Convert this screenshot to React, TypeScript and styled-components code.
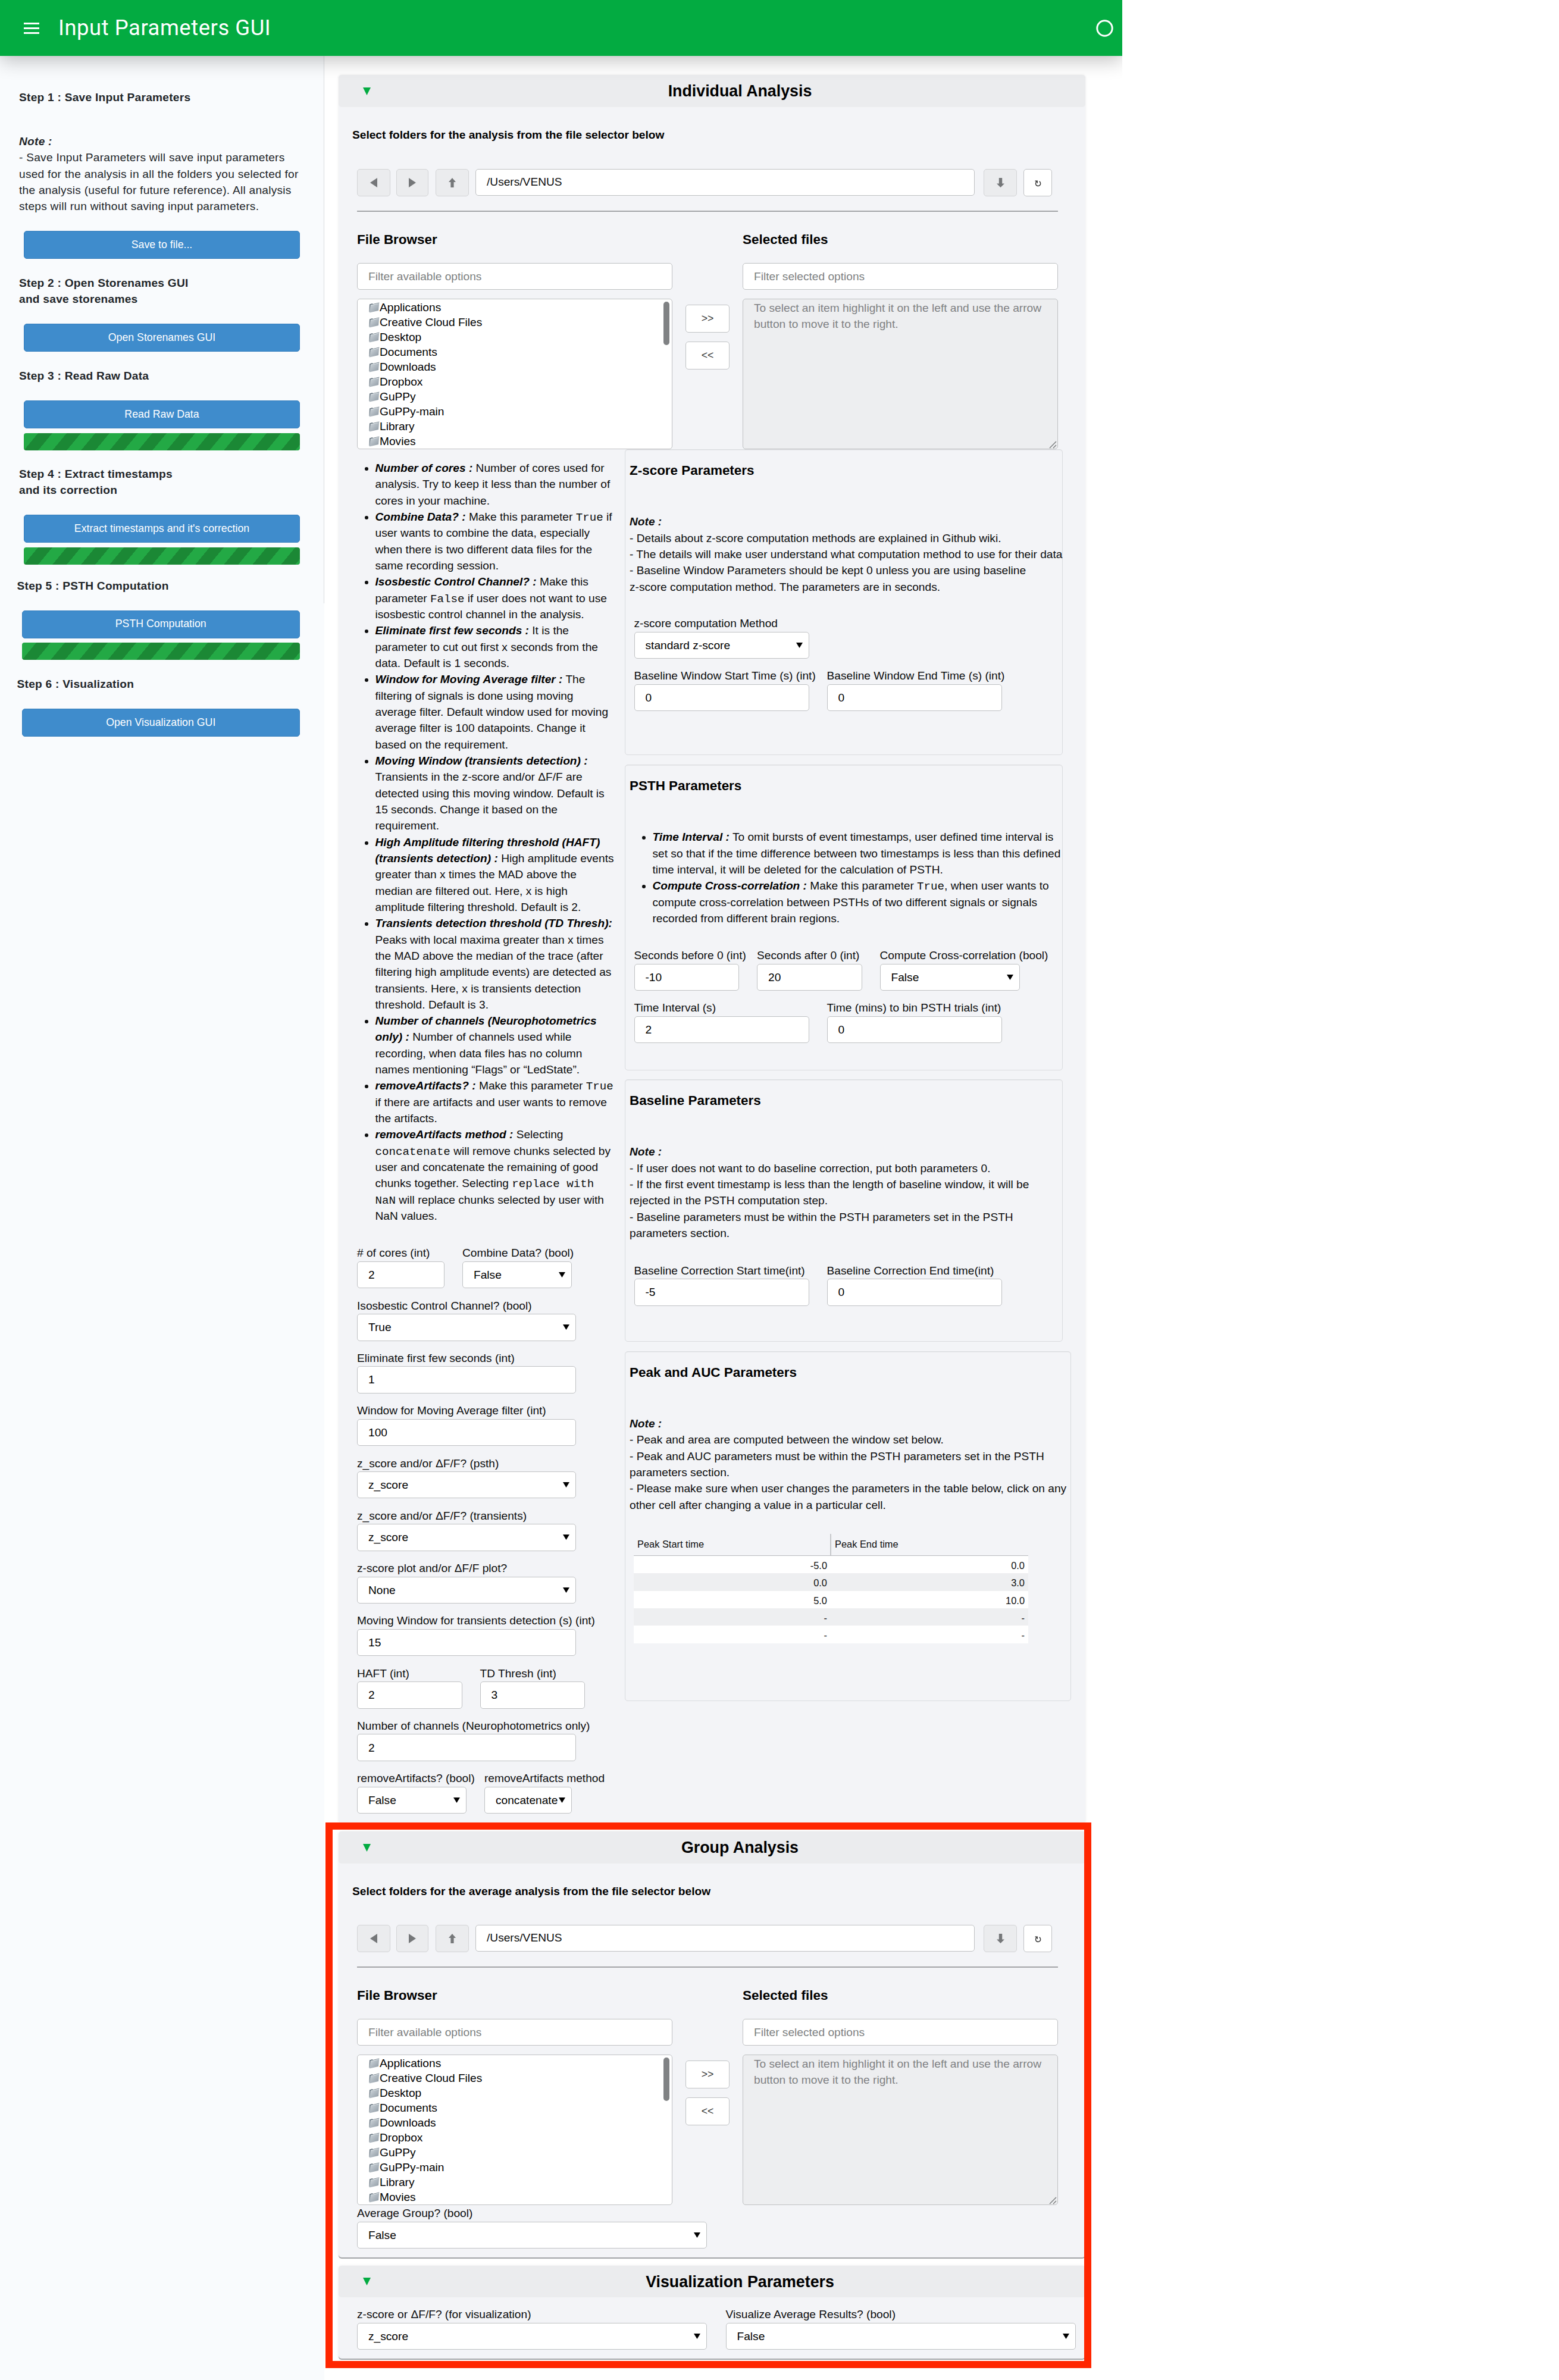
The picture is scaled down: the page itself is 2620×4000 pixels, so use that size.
import React from "react";
import styled, { createGlobalStyle } from "styled-components";

const GlobalStyle = createGlobalStyle`
  * { box-sizing: border-box; }
  body {
    margin: 0;
    background: #ffffff;
    font-family: "Liberation Sans", Arial, Helvetica, sans-serif;
    font-size: 19.15px;
    line-height: 27.33px;
    color: #0c0d0e;
  }
`;

const Page = styled.div`
  width: 1886px;
  height: 4000px;
  display: flex;
  flex-direction: column;
  overflow: hidden;
`;

const TopBar = styled.header`
  position: relative;
  z-index: 2;
  flex: none;
  height: 94px;
  padding: 0 15px 0 40px;
  display: flex;
  align-items: center;
  background: #03ab41;
  box-shadow: 0 8px 30px rgba(0, 0, 0, 0.24);
`;

const AppTitle = styled.h1`
  flex: 1;
  margin: 0 0 0 32px;
  color: #ffffff;
  font: 400 36.4px/94px Roboto, sans-serif;
  letter-spacing: 0.55px;
`;

const Body = styled.div`
  flex: 1;
  display: flex;
`;

const Sidebar = styled.aside`
  width: 545px;
  flex: none;
  background: #f9fbfd;
`;

const SidebarInner = styled.div`
  height: 920px;
  border-right: 1px solid #d9dcdf;
`;

const Step = styled.section<{ $left?: number; $top: number }>`
  padding: ${(p) => p.$top}px 40px 0 ${(p) => p.$left ?? 40}px;
  color: #212529;
  letter-spacing: 0.25px;
`;

const StepTitle = styled.div`
  margin-left: -8px;
  font-weight: 700;
  line-height: 27.4px;
  white-space: pre-line;
`;

const SideNote = styled.div`
  margin: 46.4px 0 0 -8px;
  line-height: 27.4px;
  white-space: pre;
`;

const StepButton = styled.div`
  height: 47px;
  margin-top: 27.5px;
  display: flex;
  align-items: center;
  justify-content: center;
  border: 1px solid #357ebd;
  border-radius: 5px;
  background: #3f8ccc;
  color: #ffffff;
  font-size: 17.75px;
  letter-spacing: 0;
`;

const Progress = styled.div`
  height: 29px;
  margin-top: 7.7px;
  border-radius: 4px;
  background: repeating-linear-gradient(
    129.6deg,
    #23a945 0,
    #23a945 18.45px,
    #1b8835 18.55px,
    #1b8835 36.95px,
    #23a945 37px
  );
`;

const Main = styled.main`
  position: relative;
  flex: 1;
  padding: 32px 0 0 24px;
`;

const Card = styled.section<{ $height: number; $gap?: number; $line?: boolean }>`
  width: 1255px;
  height: ${(p) => p.$height}px;
  margin-bottom: ${(p) => p.$gap ?? 0}px;
  border-radius: 5px;
  background: #f3f4f7;
  box-shadow: 0 0 4px rgba(0, 0, 0, 0.09)
    ${(p) => (p.$line ? ", 0 2px 0 #a8aaad" : "")};
`;

const CardHeader = styled.div<{ $height: number }>`
  height: ${(p) => p.$height}px;
  padding-left: 41px;
  display: flex;
  align-items: center;
  border-radius: 5px;
  background: #ebecee;
`;

const CardTitle = styled.h2`
  flex: 1;
  margin: 0 0 0 40px;
  text-align: center;
  font-size: 26.8px;
  line-height: 34px;
  font-weight: 700;
  color: #000;
`;

const Hint = styled.div`
  height: 27px;
  margin: 33px 0 0 23px;
  font-weight: 700;
  color: #000;
`;

const Browser = styled.div<{ $top: number }>`
  width: 1178px;
  margin: ${(p) => p.$top}px 0 0 31px;
`;

const NavRow = styled.div`
  height: 46px;
  display: flex;
  align-items: flex-start;
`;

const NavButton = styled.div<{ $w: number; $ml?: number; $active?: boolean }>`
  width: ${(p) => p.$w}px;
  height: 46px;
  margin-left: ${(p) => p.$ml ?? 0}px;
  display: flex;
  align-items: center;
  justify-content: center;
  border: 1px solid ${(p) => (p.$active ? "#c0c2c4" : "#d3d4d6")};
  border-radius: 5px;
  background: ${(p) => (p.$active ? "#fff" : "#ebecee")};
`;

const PathBox = styled.div`
  width: 839px;
  height: 45px;
  margin-left: 11px;
  padding-left: 18px;
  border: 1px solid #bfc1c3;
  border-radius: 5px;
  background: #fff;
  line-height: 42px;
`;

const Rule = styled.div`
  height: 2px;
  margin-top: 24px;
  background: #a3a5a8;
`;

const Columns = styled.div`
  margin-top: 31px;
  display: grid;
  grid-template-columns: 530px 118px 530px;
`;

const ColumnTitle = styled.h3`
  margin: 0 0 23px;
  font-size: 22.45px;
  line-height: 32px;
  font-weight: 700;
  color: #000;
`;

const Filter = styled.div`
  height: 45px;
  padding-left: 18px;
  border: 1px solid #bfc1c3;
  border-radius: 5px;
  background: #fff;
  color: #7d7f81;
  line-height: 43px;
`;

const FileList = styled.div`
  position: relative;
  height: 253px;
  margin-top: 15px;
  padding: 1px 0 0 19px;
  overflow: hidden;
  border: 1px solid #bfc1c3;
  border-radius: 5px;
  background: #fff;
`;

const FileRow = styled.div`
  height: 25.05px;
  display: flex;
  align-items: center;
  color: #000;
`;

const ScrollThumb = styled.div`
  position: absolute;
  top: 4px;
  right: 4px;
  width: 10px;
  height: 73px;
  border-radius: 5px;
  background: #808284;
`;

const MoveColumn = styled.div`
  padding: 125px 22px 0;
  display: flex;
  flex-direction: column;
  gap: 15px;
`;

const MoveButton = styled.div`
  height: 47px;
  display: flex;
  align-items: center;
  justify-content: center;
  border: 1px solid #c0c2c4;
  border-radius: 5px;
  background: #fff;
  color: #333;
  font-size: 17.75px;
`;

const SelectedBox = styled.div`
  position: relative;
  height: 253px;
  margin-top: 15px;
  padding: 1px 0 0 18px;
  border: 1px solid #bfc1c3;
  border-radius: 5px;
  background: #edeef0;
  color: #7f8183;
  white-space: pre;
`;

const Grip = styled.svg`
  position: absolute;
  right: 1px;
  bottom: 0;
`;

const RefreshIcon = styled.svg`
  margin-top: 4px;
`;

const Split = styled.div`
  display: flex;
`;

const LeftColumn = styled.div`
  width: 481px;
  flex: none;
  padding-left: 31px;
`;

const RightColumn = styled.div`
  display: flex;
  flex-direction: column;
  gap: 15.5px;
`;

const Bullets = styled.ul<{ $pad: number; $top: number }>`
  margin: ${(p) => p.$top}px 0 0;
  padding: 0 0 0 ${(p) => p.$pad}px;
  white-space: nowrap;
  code {
    font-family: "Liberation Mono", "Courier New", monospace;
    font-size: 19.15px;
    line-height: 20px;
  }
  b {
    font-style: italic;
    color: #000;
  }
`;

const Panel = styled.section<{ $height: number; $wide?: boolean }>`
  width: ${(p) => (p.$wide ? 750 : 736)}px;
  height: ${(p) => p.$height}px;
  padding: 19px 0 0 7px;
  border: 1px solid #dadcdf;
  border-radius: 5px;
  background: #f3f4f7;
  box-shadow: inset 0 1px 1px rgba(0, 0, 0, 0.05);
`;

const PanelTitle = styled.h3`
  margin: 0;
  font-size: 22.45px;
  line-height: 32px;
  font-weight: 700;
  color: #000;
`;

const PanelNote = styled.div`
  margin-top: 56.4px;
  white-space: pre;
`;

const NoteHead = styled.b`
  font-style: italic;
`;

const Form = styled.div<{ $top: number; $left?: number }>`
  margin: ${(p) => p.$top}px 0 0 ${(p) => p.$left ?? 0}px;
`;

const FormRow = styled.div<{ $gap: number }>`
  height: 88.3px;
  display: flex;
  gap: ${(p) => p.$gap}px;
`;

const FieldBox = styled.div<{ $w: number }>`
  width: ${(p) => p.$w}px;
  flex: none;
`;

const FieldLabel = styled.div`
  height: 27.5px;
  white-space: nowrap;
`;

const Control = styled.div`
  height: 45.4px;
  padding: 0 10px 0 18px;
  display: flex;
  align-items: center;
  justify-content: space-between;
  border: 1px solid #bfc1c3;
  border-radius: 5px;
  background: #fff;
  color: #000;
`;

const Table = styled.div`
  width: 663px;
  margin: 34.8px 0 0 7px;
  font-size: 16.4px;
`;

const TableHead = styled.div`
  height: 37px;
  display: grid;
  grid-template-columns: 330px 333px;
  border-bottom: 1px solid #b9bbbe;
  line-height: 35px;
`;

const HeadCell = styled.div<{ $divided?: boolean }>`
  padding-left: 6px;
  border-left: ${(p) => (p.$divided ? "2px solid #c6c8cb" : "0")};
`;

const TableRow = styled.div<{ $alt: boolean }>`
  height: 29.45px;
  display: grid;
  grid-template-columns: 331px 332px;
  background: ${(p) => (p.$alt ? "#eeeff1" : "#ffffff")};
  line-height: 33px;
`;

const Cell = styled.div`
  padding-right: 6px;
  text-align: right;
`;

const Highlight = styled.div`
  position: absolute;
  top: 2969px;
  left: 2px;
  width: 1287px;
  height: 917px;
  border: 12.5px solid #ff2600;
`;

const Toggle = () => (
  <svg width="13" height="13" viewBox="0 0 13 13">
    <path d="M0 0H13L6.5 13Z" fill="#03ab41" />
  </svg>
);

const Caret = () => (
  <svg width="11" height="9" viewBox="0 0 11 9">
    <path d="M0 0H11L5.5 9Z" fill="#000" />
  </svg>
);

const Folder = () => (
  <svg width="18" height="18" viewBox="0 0 18 18">
    <defs>
      <linearGradient id="folder" x1="0" y1="0" x2="1" y2="1">
        <stop offset="0" stopColor="#d3dadf" />
        <stop offset="1" stopColor="#8d98a2" />
      </linearGradient>
    </defs>
    <path d="M1 3.6 5.6 2l1.2.9L17.4.6 16.6 3 2 17 .4 16Z" fill="#66747f" />
    <path d="M2.6 5 17.2 1.8 16 14 .8 17.4Z" fill="url(#folder)" />
    <path d="M2.8 5.1 16.8 2" stroke="#eaeff2" strokeWidth=".9" />
  </svg>
);

type FieldSpec = { label: string; value: string; w: number; select?: boolean };

const Field = ({ label, value, w, select }: FieldSpec) => (
  <FieldBox $w={w}>
    <FieldLabel>{label}</FieldLabel>
    <Control>
      <span>{value}</span>
      {select && <Caret />}
    </Control>
  </FieldBox>
);

const Fields = ({ rows, gap = 30 }: { rows: FieldSpec[][]; gap?: number }) => (
  <>
    {rows.map((row, i) => (
      <FormRow key={i} $gap={gap}>
        {row.map((f) => (
          <Field key={f.label} {...f} />
        ))}
      </FormRow>
    ))}
  </>
);

const FILES = [
  "Applications",
  "Creative Cloud Files",
  "Desktop",
  "Documents",
  "Downloads",
  "Dropbox",
  "GuPPy",
  "GuPPy-main",
  "Library",
  "Movies",
];

const FileSelector = ({ hint, top = 44 }: { hint: string; top?: number }) => (
  <>
    <Hint>{hint}</Hint>
    <Browser $top={top}>
      <NavRow>
        <NavButton $w={56}>
          <svg width="12" height="16" viewBox="0 0 12 16">
            <path d="M12 0V16L0 8Z" fill="#757779" />
          </svg>
        </NavButton>
        <NavButton $w={54} $ml={10}>
          <svg width="12" height="16" viewBox="0 0 12 16">
            <path d="M0 0V16L12 8Z" fill="#757779" />
          </svg>
        </NavButton>
        <NavButton $w={56} $ml={12}>
          <svg width="12" height="16" viewBox="0 0 12 16">
            <path d="M6 0 12 7H8.6V16H3.4V7H0Z" fill="#757779" />
          </svg>
        </NavButton>
        <PathBox>/Users/VENUS</PathBox>
        <NavButton $w={56} $ml={15}>
          <svg width="13" height="16" viewBox="0 0 13 16">
            <path d="M6.5 16 0 9.5H3.8V0H9.2V9.5H13Z" fill="#757779" />
          </svg>
        </NavButton>
        <NavButton $w={48} $ml={11} $active>
          <RefreshIcon width="11" height="12" viewBox="0 0 11 12">
            <path
              d="M7.6 1.9A4.1 4.1 0 1 1 3.4 2M.6 1.3H4.2V5"
              fill="none"
              stroke="#333"
              strokeWidth="1.4"
            />
          </RefreshIcon>
        </NavButton>
      </NavRow>
      <Rule />
      <Columns>
        <div>
          <ColumnTitle>File Browser</ColumnTitle>
          <Filter>Filter available options</Filter>
          <FileList>
            {FILES.map((name) => (
              <FileRow key={name}>
                <Folder />
                {name}
              </FileRow>
            ))}
            <ScrollThumb />
          </FileList>
        </div>
        <MoveColumn>
          <MoveButton>&gt;&gt;</MoveButton>
          <MoveButton>&lt;&lt;</MoveButton>
        </MoveColumn>
        <div>
          <ColumnTitle>Selected files</ColumnTitle>
          <Filter>Filter selected options</Filter>
          <SelectedBox>
            {"To select an item highlight it on the left and use the arrow\nbutton to move it to the right."}
            <Grip width="13" height="13" viewBox="0 0 13 13">
              <path d="M1 12 12 1M7 12 12 7" stroke="#6f7173" strokeWidth="1.2" />
            </Grip>
          </SelectedBox>
        </div>
      </Columns>
    </Browser>
  </>
);

const Header = ({ title, height = 54 }: { title: string; height?: number }) => (
  <CardHeader $height={height}>
    <Toggle />
    <CardTitle>{title}</CardTitle>
  </CardHeader>
);

const LEFT_ROWS: FieldSpec[][] = [
  [
    { label: "# of cores (int)", value: "2", w: 147 },
    { label: "Combine Data? (bool)", value: "False", w: 184, select: true },
  ],
  [{ label: "Isosbestic Control Channel? (bool)", value: "True", w: 368, select: true }],
  [{ label: "Eliminate first few seconds (int)", value: "1", w: 368 }],
  [{ label: "Window for Moving Average filter (int)", value: "100", w: 368 }],
  [{ label: "z_score and/or ΔF/F? (psth)", value: "z_score", w: 368, select: true }],
  [{ label: "z_score and/or ΔF/F? (transients)", value: "z_score", w: 368, select: true }],
  [{ label: "z-score plot and/or ΔF/F plot?", value: "None", w: 368, select: true }],
  [{ label: "Moving Window for transients detection (s) (int)", value: "15", w: 368 }],
  [
    { label: "HAFT (int)", value: "2", w: 176.5 },
    { label: "TD Thresh (int)", value: "3", w: 176.5 },
  ],
  [{ label: "Number of channels (Neurophotometrics only)", value: "2", w: 368 }],
  [
    { label: "removeArtifacts? (bool)", value: "False", w: 184, select: true },
    { label: "removeArtifacts method", value: "concatenate", w: 147, select: true },
  ],
];

const TABLE = [
  ["-5.0", "0.0"],
  ["0.0", "3.0"],
  ["5.0", "10.0"],
  ["-", "-"],
  ["-", "-"],
];

export default function App() {
  return (
    <>
      <GlobalStyle />
      <Page>
        <TopBar>
          <svg width="26" height="19" viewBox="0 0 26 19">
            <path d="M0 1.5H26M0 9.5H26M0 17.5H26" stroke="#fff" strokeWidth="3" />
          </svg>
          <AppTitle>Input Parameters GUI</AppTitle>
          <svg width="29" height="29" viewBox="0 0 29 29">
            <circle cx="14.5" cy="14.5" r="12.7" fill="none" stroke="#fff" strokeWidth="3" />
          </svg>
        </TopBar>
        <Body>
          <Sidebar>
            <SidebarInner>
              <Step $top={56}>
                <StepTitle>Step 1 : Save Input Parameters</StepTitle>
                <SideNote>
                  <NoteHead>Note :</NoteHead>
                  {"\n- Save Input Parameters will save input parameters\nused for the analysis in all the folders you selected for\nthe analysis (useful for future reference). All analysis\nsteps will run without saving input parameters."}
                </SideNote>
                <StepButton>Save to file...</StepButton>
              </Step>
              <Step $top={26.5}>
                <StepTitle>{"Step 2 : Open Storenames GUI\nand save storenames"}</StepTitle>
                <StepButton>Open Storenames GUI</StepButton>
              </Step>
              <Step $top={26.8}>
                <StepTitle>Step 3 : Read Raw Data</StepTitle>
                <StepButton>Read Raw Data</StepButton>
                <Progress />
              </Step>
              <Step $top={26.4}>
                <StepTitle>{"Step 4 : Extract timestamps\nand its correction"}</StepTitle>
                <StepButton>Extract timestamps and it's correction</StepButton>
                <Progress />
              </Step>
              <Step $top={21.8} $left={36.5}>
                <StepTitle>Step 5 : PSTH Computation</StepTitle>
                <StepButton>PSTH Computation</StepButton>
                <Progress />
              </Step>
              <Step $top={27} $left={36.5}>
                <StepTitle>Step 6 : Visualization</StepTitle>
                <StepButton>Open Visualization GUI</StepButton>
              </Step>
            </SidebarInner>
          </Sidebar>
          <Main>
            <Card $height={2938} $gap={14}>
              <Header title="Individual Analysis" />
              <FileSelector hint="Select folders for the analysis from the file selector below" />
              <Split>
                <LeftColumn>
                  <Bullets $pad={30.5} $top={18}>
                    <li>
                      <b>Number of cores :</b> Number of cores used for<br />
                      analysis. Try to keep it less than the number of<br />
                      cores in your machine.
                    </li>
                    <li>
                      <b>Combine Data? :</b> Make this parameter <code>True</code> if<br />
                      user wants to combine the data, especially<br />
                      when there is two different data files for the<br />
                      same recording session.
                    </li>
                    <li>
                      <b>Isosbestic Control Channel? :</b> Make this<br />
                      parameter <code>False</code> if user does not want to use<br />
                      isosbestic control channel in the analysis.
                    </li>
                    <li>
                      <b>Eliminate first few seconds :</b> It is the<br />
                      parameter to cut out first x seconds from the<br />
                      data. Default is 1 seconds.
                    </li>
                    <li>
                      <b>Window for Moving Average filter :</b> The<br />
                      filtering of signals is done using moving<br />
                      average filter. Default window used for moving<br />
                      average filter is 100 datapoints. Change it<br />
                      based on the requirement.
                    </li>
                    <li>
                      <b>Moving Window (transients detection) :</b><br />
                      Transients in the z-score and/or ΔF/F are<br />
                      detected using this moving window. Default is<br />
                      15 seconds. Change it based on the<br />
                      requirement.
                    </li>
                    <li>
                      <b>High Amplitude filtering threshold (HAFT)<br />
                      (transients detection) :</b> High amplitude events<br />
                      greater than x times the MAD above the<br />
                      median are filtered out. Here, x is high<br />
                      amplitude filtering threshold. Default is 2.
                    </li>
                    <li>
                      <b>Transients detection threshold (TD Thresh):</b><br />
                      Peaks with local maxima greater than x times<br />
                      the MAD above the median of the trace (after<br />
                      filtering high amplitude events) are detected as<br />
                      transients. Here, x is transients detection<br />
                      threshold. Default is 3.
                    </li>
                    <li>
                      <b>Number of channels (Neurophotometrics<br />
                      only) :</b> Number of channels used while<br />
                      recording, when data files has no column<br />
                      names mentioning “Flags” or “LedState”.
                    </li>
                    <li>
                      <b>removeArtifacts? :</b> Make this parameter <code>True</code><br />
                      if there are artifacts and user wants to remove<br />
                      the artifacts.
                    </li>
                    <li>
                      <b>removeArtifacts method :</b> Selecting<br />
                      <code>concatenate</code> will remove chunks selected by<br />
                      user and concatenate the remaining of good<br />
                      chunks together. Selecting <code>replace with</code><br />
                      <code>NaN</code> will replace chunks selected by user with<br />
                      NaN values.
                    </li>
                  </Bullets>
                  <Form $top={34.9}>
                    <Fields rows={LEFT_ROWS} />
                  </Form>
                </LeftColumn>
                <RightColumn>
                  <Panel $height={514}>
                    <PanelTitle>Z-score Parameters</PanelTitle>
                    <PanelNote>
                      <NoteHead>Note :</NoteHead>
                      {"\n- Details about z-score computation methods are explained in Github wiki.\n- The details will make user understand what computation method to use for their data\n- Baseline Window Parameters should be kept 0 unless you are using baseline\nz-score computation method. The parameters are in seconds."}
                    </PanelNote>
                    <Form $top={34} $left={7.5}>
                      <Fields
                        rows={[
                          [{ label: "z-score computation Method", value: "standard z-score", w: 294, select: true }],
                          [
                            { label: "Baseline Window Start Time (s) (int)", value: "0", w: 294 },
                            { label: "Baseline Window End Time (s) (int)", value: "0", w: 294 },
                          ],
                        ]}
                      />
                    </Form>
                  </Panel>
                  <Panel $height={514}>
                    <PanelTitle>PSTH Parameters</PanelTitle>
                    <Bullets $pad={38.5} $top={56.7}>
                      <li>
                        <b>Time Interval :</b> To omit bursts of event timestamps, user defined time interval is<br />
                        set so that if the time difference between two timestamps is less than this defined<br />
                        time interval, it will be deleted for the calculation of PSTH.
                      </li>
                      <li>
                        <b>Compute Cross-correlation :</b> Make this parameter <code>True</code>, when user wants to<br />
                        compute cross-correlation between PSTHs of two different signals or signals<br />
                        recorded from different brain regions.
                      </li>
                    </Bullets>
                    <Form $top={35} $left={7.5}>
                      <Fields
                        rows={[
                          [
                            { label: "Seconds before 0 (int)", value: "-10", w: 176.5 },
                            { label: "Seconds after 0 (int)", value: "20", w: 176.5 },
                            { label: "Compute Cross-correlation (bool)", value: "False", w: 235.5, select: true },
                          ],
                          [
                            { label: "Time Interval (s)", value: "2", w: 294 },
                            { label: "Time (mins) to bin PSTH trials (int)", value: "0", w: 294 },
                          ],
                        ]}
                      />
                    </Form>
                  </Panel>
                  <Panel $height={441}>
                    <PanelTitle>Baseline Parameters</PanelTitle>
                    <PanelNote>
                      <NoteHead>Note :</NoteHead>
                      {"\n- If user does not want to do baseline correction, put both parameters 0.\n- If the first event timestamp is less than the length of baseline window, it will be\nrejected in the PSTH computation step.\n- Baseline parameters must be within the PSTH parameters set in the PSTH\nparameters section."}
                    </PanelNote>
                    <Form $top={35.3} $left={7.5}>
                      <Fields
                        rows={[
                          [
                            { label: "Baseline Correction Start time(int)", value: "-5", w: 294 },
                            { label: "Baseline Correction End time(int)", value: "0", w: 294 },
                          ],
                        ]}
                      />
                    </Form>
                  </Panel>
                  <Panel $height={588} $wide>
                    <PanelTitle>Peak and AUC Parameters</PanelTitle>
                    <PanelNote>
                      <NoteHead>Note :</NoteHead>
                      {"\n- Peak and area are computed between the window set below.\n- Peak and AUC parameters must be within the PSTH parameters set in the PSTH\nparameters section.\n- Please make sure when user changes the parameters in the table below, click on any\nother cell after changing a value in a particular cell."}
                    </PanelNote>
                    <Table>
                      <TableHead>
                        <HeadCell>Peak Start time</HeadCell>
                        <HeadCell $divided>Peak End time</HeadCell>
                      </TableHead>
                      {TABLE.map((row, i) => (
                        <TableRow key={i} $alt={i % 2 === 1}>
                          {row.map((v, j) => (
                            <Cell key={j}>{v}</Cell>
                          ))}
                        </TableRow>
                      ))}
                    </Table>
                  </Panel>
                </RightColumn>
              </Split>
            </Card>
            <Card $height={716} $gap={14} $line>
              <Header title="Group Analysis" />
              <FileSelector
                top={43}
                hint="Select folders for the average analysis from the file selector below"
              />
              <Form $top={0} $left={31}>
                <Field label="Average Group? (bool)" value="False" w={588} select />
              </Form>
            </Card>
            <Card $height={156} $line>
              <Header title="Visualization Parameters" height={53} />
              <Form $top={15} $left={31}>
                <Fields
                  gap={31.5}
                  rows={[
                    [
                      { label: "z-score or ΔF/F? (for visualization)", value: "z_score", w: 588, select: true },
                      { label: "Visualize Average Results? (bool)", value: "False", w: 588, select: true },
                    ],
                  ]}
                />
              </Form>
            </Card>
            <Highlight />
          </Main>
        </Body>
      </Page>
    </>
  );
}
